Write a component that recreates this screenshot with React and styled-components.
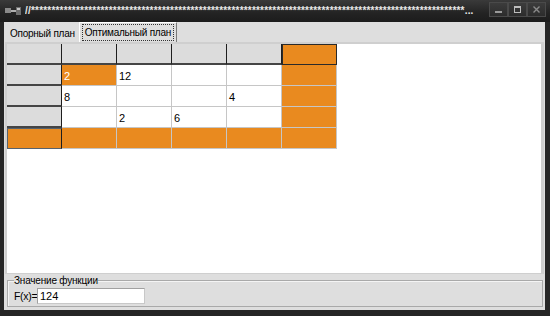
import React from "react";
import styled, { createGlobalStyle } from "styled-components";

const Global = createGlobalStyle`
  html, body { margin: 0; padding: 0; background: #ffffff; }
  body { width: 550px; height: 316px; overflow: hidden; font-family: "Liberation Sans", Arial, sans-serif; }
`;

const Window = styled.div`
  width: 550px;
  height: 316px;
  display: flex;
  flex-direction: column;
  background: #262626;
  box-sizing: border-box;
`;

const TitleBar = styled.div`
  height: 22px;
  flex: none;
  display: flex;
  align-items: center;
  padding: 0 4px 0 5px;
  background: linear-gradient(#3a3a3a, #232323 60%, #1c1c1c);
  box-sizing: border-box;
`;

const AppIcon = styled.svg`
  width: 17px;
  height: 12px;
  flex: none;
  margin-right: 3px;
`;

const Title = styled.div`
  flex: 1;
  min-width: 0;
  white-space: nowrap;
  overflow: hidden;
  color: #e8e8e8;
  font: bold 10px "Liberation Sans", Arial, sans-serif;
  letter-spacing: 0.2px;
  line-height: 12px;
  margin-right: 6px;
`;

const Buttons = styled.div`
  display: flex;
  flex: none;
  margin-top: -4px;
`;

const WinButton = styled.div`
  width: 19px;
  height: 15px;
  box-sizing: border-box;
  border: 1px solid #4a4a4a;
  background: linear-gradient(#3c3c3c, #2c2c2c);
  display: flex;
  align-items: center;
  justify-content: center;
`;

const Frame = styled.div`
  flex: 1;
  display: flex;
  flex-direction: column;
  padding: 0 5px 6px 4px;
  min-height: 0;
`;

const Client = styled.div`
  flex: 1;
  display: flex;
  flex-direction: column;
  background: #dedede;
  min-height: 0;
`;

const TabStrip = styled.div`
  height: 20px;
  flex: none;
  display: flex;
  align-items: flex-end;
  padding-left: 3px;
  box-sizing: border-box;
`;

const Tab = styled.div`
  height: ${(p) => (p.$active ? 20 : 18)}px;
  box-sizing: border-box;
  padding: 0 ${(p) => (p.$active ? 2 : 0)}px;
  display: flex;
  align-items: center;
  font-size: 10px;
  letter-spacing: -0.25px;
  color: #000;
  background: #dedede;
  ${(p) =>
    p.$active
      ? `border-top: 1px solid #ffffff; border-left: 1px solid #ffffff; border-right: 1px solid #7a7a7a; margin-left: 1px;`
      : ``}
`;

const TabLabel = styled.span`
  padding: 1px 2px;
  line-height: 13px;
  border: 1px ${(p) => (p.$focus ? "dotted #333" : "solid transparent")};
`;

const TabPage = styled.div`
  flex: 1;
  background: #ffffff;
  margin: 0 1px 0 1px;
  border-top: 2px solid #cfcfcf;
  border-left: 2px solid #cfcfcf;
  border-right: 3px solid #cfcfcf;
  border-bottom: 1px solid #cfcfcf;
  min-height: 0;
`;

const Grid = styled.div`
  display: grid;
  grid-template-columns: repeat(6, 55px);
  grid-auto-rows: 21px;
  width: 330px;
`;

const ORANGE = "#e98a1f";

const Cell = styled.div`
  box-sizing: border-box;
  font-size: 11px;
  line-height: 12px;
  padding: 2px 0 0 2px;
  display: flex;
  align-items: center;
  color: ${(p) => (p.$light ? "#ffffff" : "#000000")};
  background: ${(p) => (p.$orange ? ORANGE : p.$head ? "#dcdcdc" : "#ffffff")};
  border-right: 1px solid ${(p) => (p.$head ? "#1e1e1e" : "#c6c6c6")};
  border-bottom: ${(p) => (p.$head ? "2px solid #454545" : "1px solid #c6c6c6")};
  ${(p) => (p.$boxed ? "border: 1px solid #2a2a2a;" : "")}
  ${(p) => (p.$selected ? "border: 1px solid #56626e; border-right: 1px solid #1e1e1e;" : "")}
`;

const GroupBox = styled.fieldset`
  margin: 0 2px 3px 3px;
  padding: 1px 6px 2px 6px;
  border: 1px solid #a9a9a9;
  box-shadow: inset 1px 1px 0 #f4f4f4;
  display: flex;
  align-items: center;
  min-width: 0;
`;

const Legend = styled.legend`
  font-size: 10px;
  letter-spacing: -0.2px;
  line-height: 13px;
  padding: 0;
  margin-left: 0;
  color: #000;
`;

const Label = styled.span`
  font-size: 10.5px;
  letter-spacing: -0.3px;
  color: #000;
  width: 23px;
  flex: none;
`;

const Input = styled.div`
  width: 108px;
  height: 16px;
  box-sizing: border-box;
  background: #fff;
  border: 1px solid #c8c8c8;
  border-top-color: #a0a0a0;
  border-left-color: #a0a0a0;
  font-size: 11px;
  line-height: 14px;
  padding-left: 2px;
  color: #000;
`;

const rows = [
  [
    { head: true },
    { head: true },
    { head: true },
    { head: true },
    { head: true },
    { orange: true, boxed: true },
  ],
  [
    { head: true },
    { orange: true, light: true, text: "2" },
    { text: "12" },
    {},
    {},
    { orange: true },
  ],
  [{ head: true }, { text: "8" }, {}, {}, { text: "4" }, { orange: true }],
  [{ head: true }, {}, { text: "2" }, { text: "6" }, {}, { orange: true }],
  [
    { orange: true, selected: true },
    { orange: true },
    { orange: true },
    { orange: true },
    { orange: true },
    { orange: true },
  ],
];

export default function App() {
  return (
    <>
      <Global />
      <Window>
        <TitleBar>
          <AppIcon viewBox="0 0 17 12">
            <rect x="0" y="3" width="6" height="5" fill="#8a8a8a" />
            <rect x="6" y="5" width="5" height="2" fill="#b0b0b0" />
            <rect x="11" y="2" width="5" height="8" fill="#6e6e6e" />
            <rect x="12" y="3" width="3" height="2" fill="#c8c8c8" />
          </AppIcon>
          <Title>{"//" + "*".repeat(106) + "..."}</Title>
          <Buttons>
            <WinButton>
              <svg width="9" height="9" viewBox="0 0 9 9">
                <rect x="1" y="6" width="7" height="2" fill="#9a9a9a" />
              </svg>
            </WinButton>
            <WinButton>
              <svg width="9" height="9" viewBox="0 0 9 9">
                <rect x="1.5" y="1.5" width="6" height="6" fill="none" stroke="#bdbdbd" strokeWidth="1" />
                <rect x="1" y="1" width="7" height="2" fill="#bdbdbd" />
              </svg>
            </WinButton>
            <WinButton>
              <svg width="9" height="9" viewBox="0 0 9 9">
                <path d="M1.5 1.5 L7.5 7.5 M7.5 1.5 L1.5 7.5" stroke="#8a8a8a" strokeWidth="1.4" />
              </svg>
            </WinButton>
          </Buttons>
        </TitleBar>
        <Frame>
          <Client>
            <TabStrip>
              <Tab>
                <TabLabel>Опорный план</TabLabel>
              </Tab>
              <Tab $active>
                <TabLabel $focus>Оптимальный план</TabLabel>
              </Tab>
            </TabStrip>
            <TabPage>
              <Grid>
                {rows.map((r, ri) =>
                  r.map((c, ci) => (
                    <Cell
                      key={ri + "-" + ci}
                      $head={c.head}
                      $orange={c.orange}
                      $light={c.light}
                      $boxed={c.boxed}
                      $selected={c.selected}
                    >
                      {c.text || ""}
                    </Cell>
                  ))
                )}
              </Grid>
            </TabPage>
            <GroupBox>
              <Legend>Значение функции</Legend>
              <Label>F(x)=</Label>
              <Input>124</Input>
            </GroupBox>
          </Client>
        </Frame>
      </Window>
    </>
  );
}
